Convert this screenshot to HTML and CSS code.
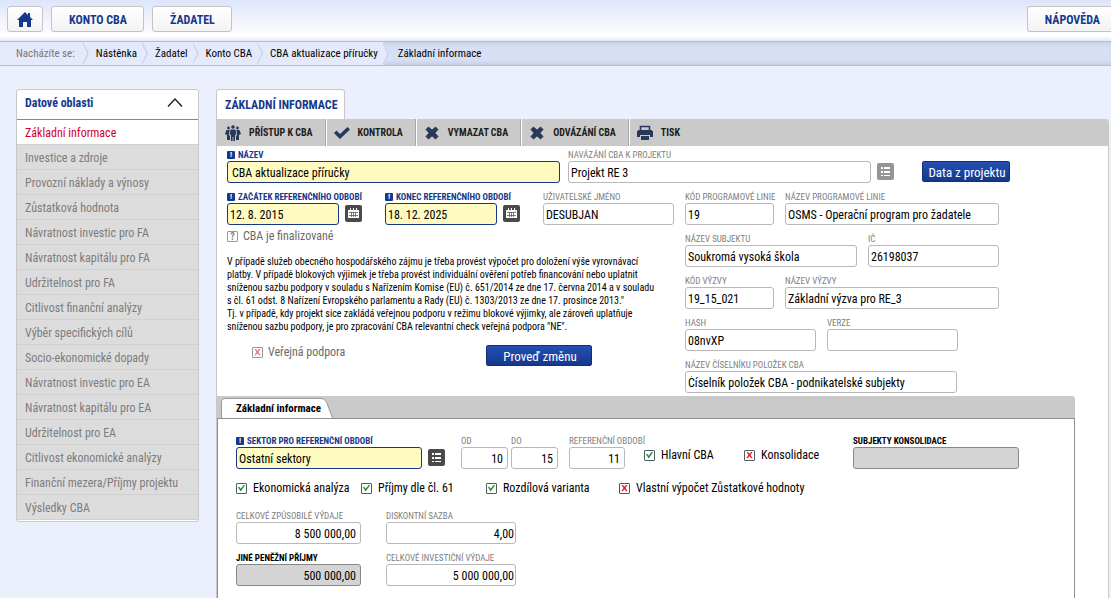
FILE: index.html
```
<!DOCTYPE html>
<html lang="cs">
<head>
  <meta charset="UTF-8" />
  <meta name="viewport" content="width=device-width, initial-scale=1.0"/>
  <title>Základní informace - CBA</title>
  <link rel="stylesheet" href="styles.css">
</head>
<body>

  <!-- Icons used more than once -->
  <svg class="sprite" aria-hidden="true">
    <symbol id="icon-cross" viewBox="0 0 16 16">
      <path d="M2 4.5 4.5 2 8 5.2 11.5 2 14 4.5 10.8 8 14 11.5 11.5 14 8 10.8 4.5 14 2 11.5 5.2 8z" fill="#27385a" stroke="#27385a" stroke-width="1" stroke-linejoin="round"/>
    </symbol>
    <symbol id="icon-list" viewBox="0 0 17 17">
      <path d="M4 4h2v2H4zM7 4h6v2H7zM4 8h2v2H4zM7 8h6v2H7zM4 12h2v1H4zM7 12h6v1H7z" fill="#fff"/>
    </symbol>
    <symbol id="icon-calendar" viewBox="0 0 17 17">
      <path d="M3 5h11v8H3z" fill="#fff"/>
      <path d="M5 3h1v3H5zM8 3h1v3H8zM11 3h1v3h-1z" fill="#fff"/>
      <path d="M4 7.5h9M4 10.5h9M6.5 7v5M8.5 7v5M10.5 7v5" stroke="#4a4a4a" stroke-width=".7" fill="none"/>
    </symbol>
  </svg>

  <header class="topbar">
    <button class="top-btn home" aria-label="Domů">
      <svg width="16" height="15" viewBox="0 0 16 15"><path d="M8 0 0 8h2v7h4v-5h4v5h4V8h2l-3-3V1h-2v2z" fill="#15388c"/></svg>
    </button>
    <button class="top-btn">KONTO CBA</button>
    <button class="top-btn">ŽADATEL</button>
    <button class="top-btn help">NÁPOVĚDA</button>
  </header>

  <nav class="breadcrumb">
    <span class="crumb here">Nacházíte se:</span>
    <a class="crumb" href="#">Nástěnka</a>
    <a class="crumb" href="#">Žadatel</a>
    <a class="crumb" href="#">Konto CBA</a>
    <a class="crumb last" href="#">CBA aktualizace příručky</a>
    <span class="current">Základní informace</span>
  </nav>

  <div class="layout">

    <aside class="sidebar">
      <h2>Datové oblasti
        <svg width="16" height="9" viewBox="0 0 16 9"><path d="M1 8.5 8 1l7 7.5" fill="none" stroke="#222" stroke-width="1.4"/></svg>
      </h2>
      <a class="active" href="#">Základní informace</a>
      <a href="#">Investice a zdroje</a>
      <a href="#">Provozní náklady a výnosy</a>
      <a href="#">Zůstatková hodnota</a>
      <a href="#">Návratnost investic pro FA</a>
      <a href="#">Návratnost kapitálu pro FA</a>
      <a href="#">Udržitelnost pro FA</a>
      <a href="#">Citlivost finanční analýzy</a>
      <a href="#">Výběr specifických cílů</a>
      <a href="#">Socio-ekonomické dopady</a>
      <a href="#">Návratnost investic pro EA</a>
      <a href="#">Návratnost kapitálu pro EA</a>
      <a href="#">Udržitelnost pro EA</a>
      <a href="#">Citlivost ekonomické analýzy</a>
      <a href="#">Finanční mezera/Příjmy projektu</a>
      <a href="#">Výsledky CBA</a>
    </aside>

    <main class="main">
      <h1 class="page-tab">ZÁKLADNÍ INFORMACE</h1>

      <div class="panel">
        <div class="toolbar">
          <button>
            <svg width="16" height="16" viewBox="0 0 16 16" fill="#27385a">
              <circle cx="8" cy="2" r="1.8"/><circle cx="3.5" cy="3" r="1.4"/><circle cx="12.5" cy="3" r="1.4"/>
              <path d="M5.5 4.5h5l.8 5-1.3.3V16H8.4v-4h-.8v4H6V9.8l-1.3-.3z"/>
              <path d="M1.5 5H4.7l-.9 5 1.2.8V15H2V10L0 9zM14.5 5h-3.2l.9 5-1.2.8V15h3V10l2-1z"/>
            </svg>
            PŘÍSTUP K CBA
          </button>
          <button>
            <svg width="16" height="16" viewBox="0 0 16 16"><path d="M0 8 2.5 5.5 6 9l7.5-7L16 4.5 6 14z" fill="#27385a"/></svg>
            KONTROLA
          </button>
          <button><svg width="16" height="16"><use href="#icon-cross"/></svg> VYMAZAT CBA</button>
          <button><svg width="16" height="16"><use href="#icon-cross"/></svg> ODVÁZÁNÍ CBA</button>
          <button>
            <svg width="16" height="16" viewBox="0 0 16 16">
              <path d="M3.5 6V1.5h9V6" fill="none" stroke="#27385a" stroke-width="1.6"/>
              <path d="M1.5 5h13L16 6.5V12h-3v-2H3v2H0V6.5z" fill="#27385a"/>
              <path d="M4 11h8v4H4z" fill="#27385a"/>
            </svg>
            TISK
          </button>
        </div>

        <form class="form">
          <div class="row">
            <div class="field required w333">
              <label for="nazev">NÁZEV</label>
              <input type="text" id="nazev" value="CBA aktualizace příručky">
            </div>
            <div class="field after-name w303">
              <label for="projekt">NAVÁZÁNÍ CBA K PROJEKTU</label>
              <input type="text" id="projekt" class="tight" value="Projekt RE 3">
            </div>
            <button type="button" class="icon-btn light" aria-label="Vybrat projekt"><svg width="17" height="17"><use href="#icon-list"/></svg></button>
            <button type="button" class="blue-btn from-project">Data z projektu</button>
          </div>

          <div class="columns">
            <div class="left">
              <div class="row">
                <div class="field required w112">
                  <label for="zacatek">ZAČÁTEK REFERENČNÍHO ODBOBÍ</label>
                  <input type="text" id="zacatek" class="tight" value="12. 8. 2015">
                </div>
                <button type="button" class="icon-btn date" aria-label="Kalendář"><svg width="17" height="17"><use href="#icon-calendar"/></svg></button>
                <div class="field required w112">
                  <label for="konec">KONEC REFERENČNÍHO OBDOBÍ</label>
                  <input type="text" id="konec" class="tight" value="18. 12. 2025">
                </div>
                <button type="button" class="icon-btn date" aria-label="Kalendář"><svg width="17" height="17"><use href="#icon-calendar"/></svg></button>
                <div class="field w131">
                  <label for="uzivatel">UŽIVATELSKÉ JMÉNO</label>
                  <input type="text" id="uzivatel" class="tight" value="DESUBJAN">
                </div>
              </div>

              <label class="check muted"><input type="checkbox" class="unknown"> CBA je finalizované</label>

              <p class="note">
                V případě služeb obecného hospodářského zájmu je třeba provést výpočet pro doložení výše vyrovnávací<br>
                platby. V případě blokových výjimek je třeba provést individuální ověření potřeb financování nebo uplatnit<br>
                sníženou sazbu podpory v souladu s Nařízením Komise (EU) č. 651/2014 ze dne 17. června 2014 a v souladu<br>
                s čl. 61 odst. 8 Nařízení Evropského parlamentu a Rady (EU) č. 1303/2013 ze dne 17. prosince 2013."<br>
                Tj. v případě, kdy projekt sice zakládá veřejnou podporu v režimu blokové výjimky, ale zároveň uplatňuje<br>
                sníženou sazbu podpory, je pro zpracování CBA relevantní check veřejná podpora "NE".
              </p>

              <div class="change">
                <label class="check muted"><input type="checkbox"> Veřejná podpora</label>
                <button type="button" class="blue-btn wide">Proveď změnu</button>
              </div>
            </div>

            <div class="right">
              <div class="row spaced">
                <div class="field w89"><label for="kodlinie">KÓD PROGRAMOVÉ LINIE</label><input type="text" id="kodlinie" class="tight" value="19"></div>
                <div class="field w214"><label for="nazevlinie">NÁZEV PROGRAMOVÉ LINIE</label><input type="text" id="nazevlinie" class="tight" value="OSMS - Operační program pro žadatele"></div>
              </div>
              <div class="row spaced">
                <div class="field w172"><label for="subjekt">NÁZEV SUBJEKTU</label><input type="text" id="subjekt" class="tight" value="Soukromá vysoká škola"></div>
                <div class="field w131"><label for="ic">IČ</label><input type="text" id="ic" class="tight" value="26198037"></div>
              </div>
              <div class="row spaced">
                <div class="field w89"><label for="kodvyzvy">KÓD VÝZVY</label><input type="text" id="kodvyzvy" class="tight" value="19_15_021"></div>
                <div class="field w214"><label for="nazevvyzvy">NÁZEV VÝZVY</label><input type="text" id="nazevvyzvy" class="tight" value="Základní výzva pro RE_3"></div>
              </div>
              <div class="row spaced">
                <div class="field w131"><label for="hash">HASH</label><input type="text" id="hash" class="tight" value="08nvXP"></div>
                <div class="field w131"><label for="verze">VERZE</label><input type="text" id="verze" class="tight" value=""></div>
              </div>
              <div class="row spaced">
                <div class="field w272"><label for="ciselnik">NÁZEV ČÍSELNÍKU POLOŽEK CBA</label><input type="text" id="ciselnik" class="tight" value="Číselník položek CBA - podnikatelské subjekty"></div>
              </div>
            </div>
          </div>
        </form>

        <section class="detail">
          <div class="detail-bar">
            <h2 class="detail-tab">
              <svg width="112" height="20" viewBox="0 0 112 20"><path d="M.5 20V3.5Q.5.5 4 .5H100Q105 .5 107 8L111.5 20" fill="#fff" stroke="#999"/></svg>
              <span>Základní informace</span>
            </h2>
          </div>

          <div class="detail-body">
            <div class="grid-row sector">
              <div class="field required">
                <label for="sektor">SEKTOR PRO REFERENČNÍ OBDOBÍ</label>
                <input type="text" id="sektor" class="tight" value="Ostatní sektory">
              </div>
              <button type="button" class="icon-btn" aria-label="Vybrat sektor"><svg width="17" height="17"><use href="#icon-list"/></svg></button>
              <div class="field"><label for="od">OD</label><input type="text" id="od" class="num" value="10"></div>
              <div class="field"><label for="do">DO</label><input type="text" id="do" class="num" value="15"></div>
              <div class="field"><label for="obdobi">REFERENČNÍ OBDOBÍ</label><input type="text" id="obdobi" class="num" value="11"></div>
              <label class="check"><input type="checkbox" checked> Hlavní CBA</label>
              <label class="check"><input type="checkbox"> Konsolidace</label>
              <div class="field off"><label for="subjekty">SUBJEKTY KONSOLIDACE</label><input type="text" id="subjekty" disabled></div>
            </div>

            <div class="grid-row checks">
              <label class="check"><input type="checkbox" checked> Ekonomická analýza</label>
              <label class="check"><input type="checkbox" checked> Příjmy dle čl. 61</label>
              <label class="check"><input type="checkbox" checked> Rozdílová varianta</label>
              <label class="check"><input type="checkbox"> Vlastní výpočet Zůstatkové hodnoty</label>
            </div>

            <div class="grid-row amounts">
              <div class="field"><label for="zpusobile">CELKOVÉ ZPŮSOBILÉ VÝDAJE</label><input type="text" id="zpusobile" class="num" value="8 500 000,00"></div>
              <div class="field"><label for="sazba">DISKONTNÍ SAZBA</label><input type="text" id="sazba" class="num edge" value="4,00"></div>
              <div class="field off"><label for="prijmy">JINÉ PENĚŽNÍ PŘÍJMY</label><input type="text" id="prijmy" class="num" value="500 000,00" disabled></div>
              <div class="field"><label for="investicni">CELKOVÉ INVESTIČNÍ VÝDAJE</label><input type="text" id="investicni" class="num edge" value="5 000 000,00"></div>
            </div>
          </div>
        </section>
      </div>
    </main>

  </div>

</body>
</html>
```
FILE: styles.css
```
* {
  box-sizing: border-box;
}

body {
  margin: 0;
  min-height: 100vh;
  display: flex;
  flex-direction: column;
  font-family: 'Roboto Condensed', 'Liberation Sans Narrow', Roboto, sans-serif;
  font-size: 12px;
  color: #000;
  background: #ecf0fd;
}

button, input {
  font-family: inherit;
  margin: 0;
}

button {
  cursor: pointer;
}

a {
  color: inherit;
  text-decoration: none;
}

svg {
  display: block;
  flex: none;
}

.sprite {
  position: absolute;
  width: 0;
  height: 0;
}

/* Top bar */
.topbar {
  display: flex;
  align-items: flex-start;
  gap: 8px;
  height: 42px;
  padding: 6px 0 0 7px;
  background: linear-gradient(#dfe6fa 1px, #fff 36px, #e4e8f3 41px);
  border-bottom: 1px solid #b4bdd6;
}

.top-btn {
  height: 26px;
  padding: 1px 16px 0 17px;
  font-size: 12px;
  font-weight: 700;
  color: #15388c;
  background: linear-gradient(#fff, #f3f3f3);
  border: 1px solid #c4c4c4;
  border-radius: 3px;
}

.top-btn.home {
  padding: 0 9px;
}

.top-btn.help {
  margin-left: auto;
  padding-right: 11px;
  border-right: none;
  border-radius: 3px 0 0 3px;
}

/* Breadcrumb */
.breadcrumb {
  display: flex;
  height: 24px;
  font-size: 11px;
  line-height: 24px;
  background: linear-gradient(#c8d0e6, #d7dff4 5px, #d7dff4 18px, #c8d0e6);
  border-bottom: 1px solid #b4bdd6;
}

.crumb {
  position: relative;
  padding: 0 11px 0 7px;
  background: #e4eafb;
}

.crumb.here {
  padding: 0 14px 0 16px;
  color: #777;
}

.crumb.last {
  clip-path: polygon(0 0, calc(100% - 6px) 0, 100% 50%, calc(100% - 6px) 100%, 0 100%);
}

/* chevron edge of each step */
.crumb::after {
  content: "";
  position: absolute;
  top: 0;
  right: 0;
  width: 6px;
  height: 100%;
  background: #c3cbe0;
  clip-path: polygon(0 0, 100% 50%, 0 100%, 0 92%, 80% 50%, 0 8%);
}

.current {
  padding-left: 9px;
}

/* Layout */
.layout {
  flex: 1;
  display: flex;
  align-items: stretch;
  gap: 17px;
  padding: 23px 2px 0 16px;
}

.sidebar {
  flex: none;
  align-self: flex-start;
  width: 183px;
  padding-bottom: 1px;
  background: #fff;
  border: 1px solid #c8c8c8;
  border-radius: 3px;
}

.sidebar h2 {
  display: flex;
  justify-content: space-between;
  align-items: center;
  height: 30px;
  margin: 0;
  padding: 0 15px 4px 8px;
  font-size: 12px;
  color: #15388c;
  border-bottom: 1px solid #888;
}

.sidebar a {
  display: block;
  height: 25px;
  padding-left: 8px;
  font-size: 12px;
  line-height: 26px;
  color: #7d7d7d;
  background: #dcdcdc;
  border-bottom: 1px solid #d0d0d0;
}

.sidebar a.active {
  color: #d4002a;
  background: #fff;
}

/* Main panel */
.main {
  flex: 1;
  display: flex;
  flex-direction: column;
  align-items: stretch;
}

.page-tab {
  align-self: flex-start;
  height: 30px;
  margin: 0;
  padding: 0 6px 0 8px;
  font-size: 12px;
  line-height: 30px;
  color: #15388c;
  background: #fff;
  border: 1px solid #c8c8c8;
  border-bottom: none;
  border-radius: 3px 3px 0 0;
}

.panel {
  flex: 1;
  display: flex;
  flex-direction: column;
  background: #fff;
  border: 1px solid #c8c8c8;
  border-top: none;
  border-bottom: none;
  border-radius: 0 3px 0 0;
}

.toolbar {
  display: flex;
  height: 27px;
  background: #cacaca;
  border-radius: 0 3px 0 0;
}

.toolbar button {
  display: flex;
  align-items: center;
  gap: 8px;
  padding: 0 12px 0 8px;
  font-size: 10px;
  font-weight: 700;
  color: #1c1c1c;
  background: none;
  border: none;
  border-right: 1px solid #a8a8a8;
  box-shadow: 1px 0 #fff;
}

.toolbar button:last-child {
  border: none;
  box-shadow: none;
}

/* Form */
.form {
  display: flex;
  flex-direction: column;
  gap: 8px;
  padding: 3px 10px;
}

.row {
  display: flex;
  align-items: flex-end;
}

.spaced {
  gap: 11px;
}

.columns {
  display: flex;
}

.left {
  flex: none;
  width: 458px;
}

.right {
  display: flex;
  flex-direction: column;
  gap: 8px;
}

.field label {
  display: block;
  height: 12px;
  font-size: 9px;
  line-height: 12px;
  color: #808080;
  white-space: nowrap;
}

.field input {
  display: block;
  width: 100%;
  height: 22px;
  padding: 1px 4px 0;
  font-size: 12px;
  color: #000;
  background: #fff;
  border: 1px solid #b8b8b8;
  border-radius: 3px;
}

.field input.tight {
  padding-left: 2px;
}

.field input.edge {
  padding-right: 1px;
}

.field input.num {
  text-align: right;
}

.required label {
  font-weight: 700;
  color: #15388c;
}

.required label::before {
  content: "!";
  display: inline-block;
  width: 8px;
  height: 8px;
  margin-right: 3px;
  font-size: 8px;
  line-height: 8px;
  text-align: center;
  vertical-align: 1px;
  color: #fff;
  background: #15388c;
  border-radius: 1px;
}

.required input {
  background: #fffac0;
  border-color: #15388c;
}

.off label {
  font-weight: 700;
  color: #000;
}

.off input {
  color: #000;
  background: #d4d4d4;
  border-color: #888;
}

.w89 { width: 89px; }
.w112 { width: 112px; }
.w131 { width: 131px; }
.w172 { width: 172px; }
.w214 { width: 214px; }
.w272 { width: 272px; }
.w303 { width: 303px; }
.w333 { width: 333px; }

.after-name {
  margin-left: 8px;
}

.icon-btn {
  flex: none;
  width: 17px;
  height: 17px;
  margin: 0 0 3px 6px;
  padding: 0;
  background: #4a4a4a;
  border: none;
  border-radius: 2px;
}

.icon-btn.light {
  background: #959595;
}

.icon-btn.date {
  margin-right: 23px;
}

.blue-btn {
  height: 21px;
  padding: 1px 0 0 2px;
  font-size: 13px;
  color: #fff;
  background: linear-gradient(#2450b4, #15388c);
  border: 1px solid #122f78;
  border-radius: 2px;
}

.from-project {
  width: 88px;
  margin: 0 0 1px 28px;
}

.wide {
  width: 106px;
}

.check {
  display: flex;
  align-items: center;
  gap: 6px;
  height: 14px;
  font-size: 12px;
  white-space: nowrap;
}

.check input {
  appearance: none;
  display: grid;
  place-items: center;
  flex: none;
  width: 11px;
  height: 11px;
  font-size: 10px;
  background: #fff;
  border: 1px solid #4d5d63;
  border-radius: 1px;
}

.check input::before {
  content: "";
  width: 7px;
  height: 7px;
  background: #e02020;
  clip-path: polygon(5% 5%, 25% 5%, 50% 32%, 75% 5%, 95% 5%, 64% 50%, 95% 95%, 75% 95%, 50% 68%, 25% 95%, 5% 95%, 36% 50%);
}

.check input:checked::before {
  background: #149030;
  clip-path: polygon(0 40%, 14% 30%, 38% 62%, 88% 0, 100% 12%, 38% 100%);
}

.check input.unknown::before {
  content: "?";
  width: auto;
  height: auto;
  font-weight: 700;
  line-height: 9px;
  color: #333;
  background: none;
  clip-path: none;
}

.check.muted {
  gap: 5px;
  color: #6a6a6a;
}

.check.muted input {
  opacity: 0.6;
}

.left > .check {
  margin-top: 4px;
}

.note {
  margin: 12px 0 0;
  font-size: 10px;
  line-height: 13px;
  white-space: nowrap;
}

.change {
  display: flex;
  align-items: flex-start;
  justify-content: space-between;
  margin-top: 12px;
  padding: 0 93px 0 25px;
}

/* Detail section */
.detail {
  flex: 1;
  display: flex;
  flex-direction: column;
  margin-right: 33px;
}

.detail-bar {
  height: 23px;
  padding: 2px 0 0 4px;
  background: #cacaca;
  border-bottom: 1px solid #909090;
  border-radius: 0 3px 0 0;
}

.detail-tab {
  display: grid;
  width: 112px;
  height: 20px;
  margin: 0;
  font-size: 11px;
  line-height: 22px;
}

.detail-tab svg,
.detail-tab span {
  grid-area: 1 / 1;
}

.detail-tab span {
  padding-left: 15px;
}

.detail-body {
  flex: 1;
  padding: 16px 18px 12px;
  border-left: 1px solid #909090;
  border-right: 1px solid #909090;
}

.grid-row {
  display: grid;
  justify-content: start;
}

.sector {
  grid-template-columns: 186px 39px 47px 3px 47px 11px 56px 19px 100px 109px 166px;
  align-items: end;
}

/* skip the narrow spacer tracks */
.sector > :nth-child(4) { grid-column: 5; }
.sector > :nth-child(5) { grid-column: 7; }
.sector > :nth-child(6) { grid-column: 9; }

.sector .check {
  margin-bottom: 7px;
}

.checks {
  grid-template-columns: 125px 125px 133px auto;
  margin-top: 12px;
}

.amounts {
  grid-template-columns: 125px 130px;
  gap: 8px 25px;
  margin-top: 15px;
}
```
